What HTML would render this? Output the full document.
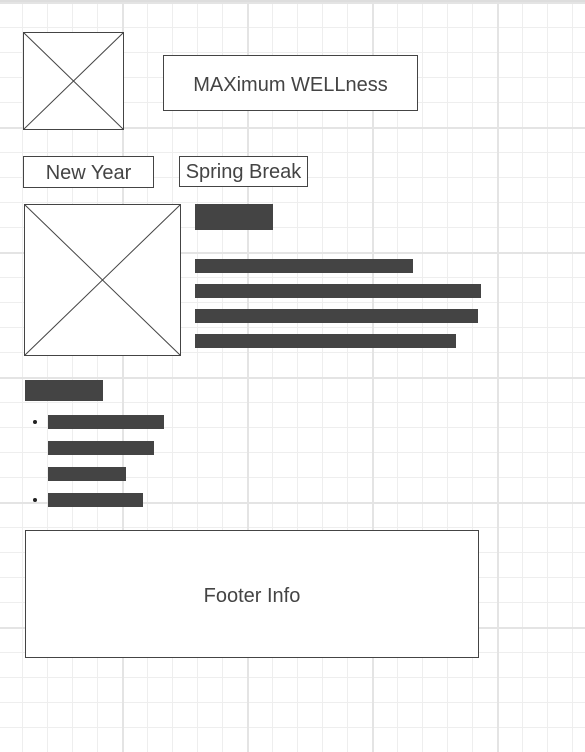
<!DOCTYPE html>
<html><head><style>
body{margin:0;width:585px;height:752px;overflow:hidden;background:#fff;font-family:"Liberation Sans",sans-serif;color:#444;position:relative;
background-image:
linear-gradient(to right,#e4e4e4 0,#e4e4e4 2px,transparent 2px),
linear-gradient(to bottom,#e4e4e4 0,#e4e4e4 2px,transparent 2px),
linear-gradient(to right,#eeeeee 0,#eeeeee 1px,transparent 1px),
linear-gradient(to bottom,#eeeeee 0,#eeeeee 1px,transparent 1px);
background-size:125px 125px,125px 125px,25px 25px,25px 25px;
background-position:122px 127px,122px 127px,22px 2px,22px 2px;}
.top{position:absolute;left:0;top:0;width:585px;height:2px;background:#ddd}
.b{position:absolute;border:1px solid #444;background:#fff;box-sizing:border-box;display:flex;align-items:center;justify-content:center;padding-top:4px}
.r{position:absolute;background:#444}
.d{position:absolute;width:4px;height:4px;border-radius:2px;background:#222}
</style></head><body>
<div class="top"></div>
<svg style="position:absolute;left:23px;top:32px" width="101" height="98"><rect x="0.5" y="0.5" width="100" height="97" fill="#fff" stroke="#444"/><line x1="0" y1="0" x2="101" y2="98" stroke="#444"/><line x1="101" y1="0" x2="0" y2="98" stroke="#444"/></svg>
<div class="b" style="left:163px;top:55px;width:255px;height:56px;font-size:20px">MAXimum WELLness</div>
<div class="b" style="left:23px;top:156px;width:131px;height:32px;font-size:20px;padding-top:2px">New Year</div>
<div class="b" style="left:179px;top:156px;width:129px;height:31px;font-size:20px;padding-top:2px">Spring Break</div>
<svg style="position:absolute;left:24px;top:204px" width="157" height="152"><rect x="0.5" y="0.5" width="156" height="151" fill="#fff" stroke="#444"/><line x1="0" y1="0" x2="157" y2="152" stroke="#444"/><line x1="157" y1="0" x2="0" y2="152" stroke="#444"/></svg>
<div class="r" style="left:195px;top:204px;width:78px;height:26px"></div>
<div class="r" style="left:195px;top:259px;width:218px;height:14px"></div>
<div class="r" style="left:195px;top:284px;width:286px;height:14px"></div>
<div class="r" style="left:195px;top:309px;width:283px;height:14px"></div>
<div class="r" style="left:195px;top:334px;width:261px;height:14px"></div>
<div class="r" style="left:25px;top:380px;width:78px;height:21px"></div>
<div class="d" style="left:33px;top:420px"></div>
<div class="d" style="left:33px;top:498px"></div>
<div class="r" style="left:48px;top:415px;width:116px;height:14px"></div>
<div class="r" style="left:48px;top:441px;width:106px;height:14px"></div>
<div class="r" style="left:48px;top:467px;width:78px;height:14px"></div>
<div class="r" style="left:48px;top:493px;width:95px;height:14px"></div>
<div class="b" style="left:25px;top:530px;width:454px;height:128px;font-size:20px;padding-top:5px">Footer Info</div>
</body></html>
